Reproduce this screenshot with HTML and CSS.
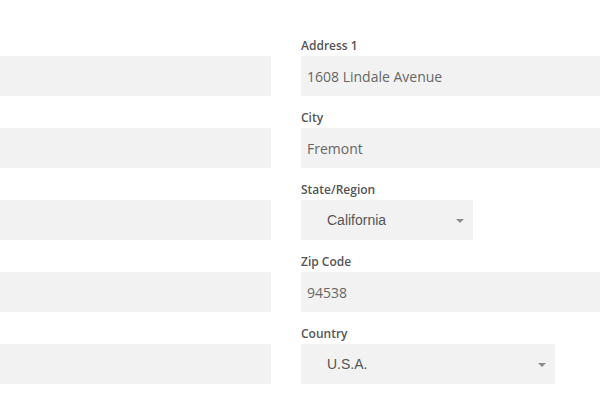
FILE: index.html
```html
<!DOCTYPE html>
<html>
<head>
<meta charset="utf-8">
<link rel="stylesheet" href="styles.css">
</head>
<body>
<div class="form">
  <div class="col col-left">
    <div class="field"><label class="lbl">First Name</label><div class="input"></div></div>
    <div class="field"><label class="lbl">Last Name</label><div class="input"></div></div>
    <div class="field"><label class="lbl">Email</label><div class="input"></div></div>
    <div class="field"><label class="lbl">Phone</label><div class="input"></div></div>
    <div class="field"><label class="lbl">Company</label><div class="input"></div></div>
  </div>
  <div class="col col-right">
    <div class="field"><label class="lbl">Address 1</label><div class="input">1608 Lindale Avenue</div></div>
    <div class="field"><label class="lbl">City</label><div class="input">Fremont</div></div>
    <div class="field"><label class="lbl">State/Region</label><div class="select select-state"><span class="sel-text">California</span><span class="arrow"></span></div></div>
    <div class="field"><label class="lbl">Zip Code</label><div class="input">94538</div></div>
    <div class="field"><label class="lbl">Country</label><div class="select select-country"><span class="sel-text">U.S.A.</span><span class="arrow"></span></div></div>
    <div class="field"><label class="lbl">Payment Method</label></div>
  </div>
</div>
</body>
</html>
```
FILE: styles.css
```css
html, body {
  margin: 0;
  padding: 0;
  background: #ffffff;
  overflow: hidden;
}
.form {
  display: grid;
  grid-template-columns: 271px 340px;
  column-gap: 30px;
  padding-top: 38px;
  width: 641px;
}
.col {
  display: flex;
  flex-direction: column;
  gap: 14px;
}
.col-left .lbl {
  visibility: hidden;
}
.field {
  display: flex;
  flex-direction: column;
  gap: 2px;
}
.lbl {
  display: block;
  font-family: "Open Sans", sans-serif;
  font-weight: 600;
  font-size: 12px;
  line-height: 16px;
  color: #555555;
}
.input {
  height: 40px;
  box-sizing: border-box;
  overflow: hidden;
  background: #f2f2f2;
  font-family: "Open Sans", sans-serif;
  font-size: 14px;
  line-height: 38px;
  color: #666666;
  padding: 2px 6px 0;
}
.select {
  height: 40px;
  background: #f2f2f2;
  display: flex;
  align-items: center;
  justify-content: space-between;
  padding: 0 9px 0 26px;
  box-sizing: border-box;
}
.select-state { width: 172px; }
.select-country { width: 254px; }
.sel-text {
  font-family: "Liberation Sans", Arial, sans-serif;
  font-size: 14px;
  color: #555555;
}
.arrow {
  width: 0;
  height: 0;
  border-left: 4px solid transparent;
  border-right: 4px solid transparent;
  border-top: 4px solid #8a8a8a;
  margin-top: 1px;
}
```
